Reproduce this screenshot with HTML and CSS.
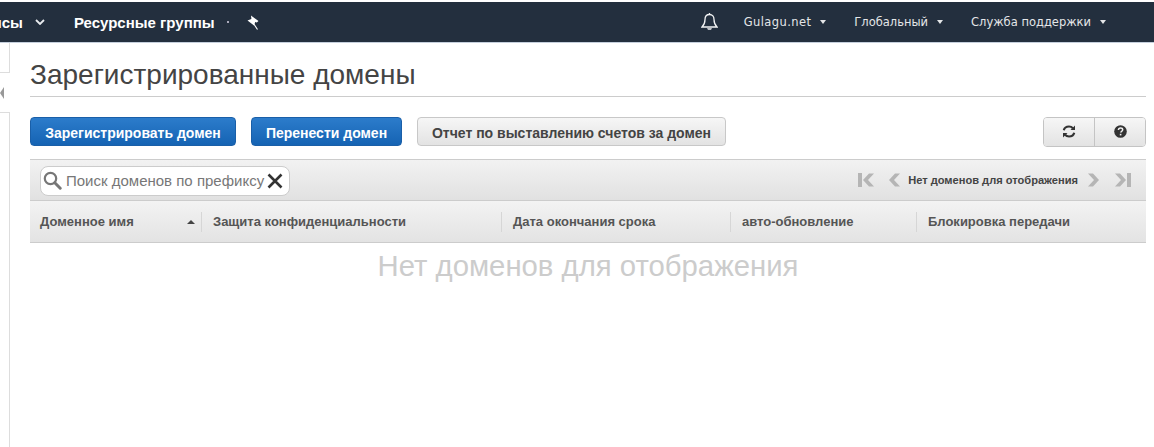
FILE: index.html
```html
<!DOCTYPE html>
<html lang="ru">
<head>
<meta charset="utf-8">
<title>Зарегистрированные домены</title>
<link rel="stylesheet" href="styles.css">
</head>
<body>
<header class="nav">
  <div class="nav-left">
    <span class="nav-item services">Сервисы</span>
    <svg class="chev" width="10" height="6" viewBox="0 0 10 6"><path d="M1 1l4 4 4-4" fill="none" stroke="#e8ebee" stroke-width="1.8"/></svg>
    <span class="nav-item groups">Ресурсные группы</span>
    <span class="dot"></span>
    <svg class="pin" width="14" height="15" viewBox="0 0 14 15"><path d="M5 0.500L12.500 6 10.800 7.600 9.200 7 8 10.500 1.500 5.500 5.400 4z" fill="#fff"/><path d="M7.500 8.500L11.500 14.500" stroke="#fff" stroke-width="1.200"/></svg>
  </div>
  <div class="nav-right">
    <svg class="bell" width="17" height="18" viewBox="0 0 17 18"><path d="M8.500 1.500c-3 0-4.500 2.200-4.500 5 0 3.500-1 5.500-3 7.500h15c-2-2-3-4-3-7.500 0-2.800-1.500-5-4.500-5z" fill="none" stroke="#f2f3f4" stroke-width="1.300"/><path d="M6 15.200h5l-1 1.600H7z" fill="#f2f3f4"/><path d="M8.500 0v2" stroke="#f2f3f4" stroke-width="1.300"/></svg>
    <span class="menu m1">Gulagu.net<i class="caret"></i></span>
    <span class="menu m2">Глобальный<i class="caret"></i></span>
    <span class="menu m3">Служба поддержки<i class="caret"></i></span>
  </div>
</header>
<div class="page">
  <aside class="rail">
    <div class="rail-top"></div>
    <div class="rail-gap"><i class="rail-arrow"></i></div>
    <div class="rail-bottom"></div>
  </aside>
  <main class="content">
    <h1 class="title">Зарегистрированные домены</h1>
    <div class="actions">
      <button class="btn primary b1">Зарегистрировать домен</button>
      <button class="btn primary b2">Перенести домен</button>
      <button class="btn plain b3">Отчет по выставлению счетов за домен</button>
      <div class="icon-group">
        <button class="icon-btn">
          <svg width="14" height="13" viewBox="0 0 14 13"><path d="M1.800 5.200C2.400 2.800 4.400 1.500 7 1.500c1.700 0 3 .7 3.900 1.700" fill="none" stroke="#333" stroke-width="2.200"/><path d="M13 .6v4.500H8.500z" fill="#333"/><path d="M12.200 7.800c-.6 2.400-2.600 3.700-5.200 3.700-1.700 0-3-.7-3.900-1.700" fill="none" stroke="#333" stroke-width="2.200"/><path d="M1 12.400V7.900h4.500z" fill="#333"/></svg>
        </button>
        <button class="icon-btn">
          <svg width="13" height="13" viewBox="0 0 13 13"><circle cx="6.500" cy="6.500" r="6.300" fill="#333"/><path d="M4.400 5c.1-1.200 1-1.900 2.200-1.900 1.200 0 2.100.7 2.100 1.700 0 1.500-2 1.500-2 2.800" fill="none" stroke="#f0f0f0" stroke-width="1.500"/><rect x="5.800" y="8.800" width="1.600" height="1.600" fill="#f0f0f0"/></svg>
        </button>
      </div>
    </div>
    <div class="toolbar">
      <div class="search">
        <svg class="mag" width="19" height="19" viewBox="0 0 19 19"><circle cx="7.500" cy="7.500" r="5.700" fill="none" stroke="#777" stroke-width="2.200"/><path d="M11.800 11.800l5.400 5.400" stroke="#777" stroke-width="3" stroke-linecap="round"/></svg>
        <span class="placeholder">Поиск доменов по префиксу</span>
        <svg class="clear" width="16" height="16" viewBox="0 0 16 16"><path d="M1.500 1.500l13 13M14.500 1.500l-13 13" stroke="#333" stroke-width="2.600"/></svg>
      </div>
      <div class="pager">
        <svg width="17" height="14" viewBox="0 0 17 14"><path d="M0 0h4v14H0zM11 0.500L5 7l6 6.500h5L10 7l6-6.500z" fill="#b5b5b5"/></svg>
        <svg class="p-prev" width="11" height="14" viewBox="0 0 11 14"><path d="M6 0.500L0 7l6 6.500h5L5 7l6-6.500z" fill="#b5b5b5"/></svg>
        <span class="pager-text">Нет доменов для отображения</span>
        <svg class="p-next" width="11" height="14" viewBox="0 0 11 14"><path d="M5 .5L11 7l-6 6.500H0L6 7 0 .5z" fill="#b5b5b5"/></svg>
        <svg class="p-last" width="17" height="14" viewBox="0 0 17 14"><path d="M17 0h-4v14h4zM6 .5L12 7l-6 6.500H1L7 7 1 .5z" fill="#b5b5b5"/></svg>
      </div>
    </div>
    <div class="thead">
      <div class="th c1">Доменное имя<i class="sort"></i></div>
      <div class="th c2">Защита конфиденциальности</div>
      <div class="th c3">Дата окончания срока</div>
      <div class="th c4">авто-обновление</div>
      <div class="th c5">Блокировка передачи</div>
    </div>
    <div class="empty">Нет доменов для отображения</div>
  </main>
</div>
</body>
</html>
```
FILE: styles.css
```css
* { box-sizing: border-box; }
html, body { margin: 0; padding: 0; height: 100%; }
body {
  background: #fff;
  font-family: "Liberation Sans", Arial, sans-serif;
  overflow: hidden;
  padding-top: 2px;
}
.nav {
  height: 41px;
  background: #232f3e;
  border-bottom: 1px solid #c5cfdc;
  display: flex;
  justify-content: space-between;
  align-items: center;
  overflow: hidden;
}
.nav-left, .nav-right { display: flex; align-items: center; }
.nav-item { color: #fff; font-weight: bold; font-size: 15px; white-space: nowrap; }
.services { margin-left: -45px; }
.chev { margin-left: 12px; }
.groups { margin-left: 29px; }
.dot { width: 2px; height: 2px; background: #aab; margin-left: 12px; }
.pin { margin-left: 17px; }
.nav-right { padding-right: 48px; }
.bell { margin-right: 26px; }
.menu {
  color: #e4e6e8;
  font-family: "DejaVu Sans", sans-serif;
  font-size: 11.500px;
  white-space: nowrap;
  display: flex;
  align-items: center;
}
.m1 { letter-spacing: .4px; }
.m2 { margin-left: 28px; }
.m3 { margin-left: 28px; }
.caret {
  width: 0; height: 0;
  border-left: 3.500px solid transparent;
  border-right: 3.500px solid transparent;
  border-top: 4px solid #e4e6e8;
  margin-left: 9px;
}
.page { display: flex; height: 404px; }
.rail { width: 10px; flex: none; display: flex; flex-direction: column; }
.rail-top { height: 30px; border-right: 1px solid #ddd; border-bottom: 1px solid #ddd; }
.rail-gap { height: 39px; display: flex; align-items: center; }
.rail-arrow {
  width: 0; height: 0;
  border-top: 6px solid transparent;
  border-bottom: 6px solid transparent;
  border-right: 4px solid #999;
}
.rail-bottom { flex: 1; border-right: 1px solid #ddd; border-top: 1px solid #ddd; }
.content { width: 1116px; margin-left: 20px; }
.title {
  margin: 0;
  height: 54px;
  padding-top: 15px;
  border-bottom: 1px solid #ccc;
  font-size: 28px;
  font-weight: normal;
  line-height: 34px;
  color: #444;
  white-space: nowrap;
}
.actions { display: flex; align-items: flex-start; margin-top: 20px; height: 42px; }
.btn {
  height: 29px;
  padding: 2px 0 0;
  border-radius: 4px;
  font-family: "Liberation Sans", Arial, sans-serif;
  font-size: 14px;
  font-weight: bold;
  white-space: nowrap;
}
.primary {
  color: #fff;
  border: 1px solid #1a5fa8;
  background: linear-gradient(#2c7ccb, #1563b3);
}
.plain {
  color: #444;
  border: 1px solid #c8c8c8;
  background: linear-gradient(#f6f6f6, #e3e3e3);
}
.b1 { width: 206px; }
.b2 { width: 151px; margin-left: 15px; }
.b3 { width: 309px; margin-left: 15px; }
.icon-group {
  display: flex;
  margin-left: auto;
  width: 103px;
  height: 30px;
  border: 1px solid #c4c4c4;
  border-radius: 4px;
  overflow: hidden;
}
.icon-btn {
  flex: 1;
  border: 0;
  padding: 0 0 2px;
  background: linear-gradient(#f6f6f6, #e3e3e3);
  display: flex;
  align-items: center;
  justify-content: center;
}
.icon-btn + .icon-btn { border-left: 1px solid #c4c4c4; }
.toolbar {
  height: 42px;
  border-top: 1px solid #ccc;
  border-bottom: 1px solid #ccc;
  background: linear-gradient(#f2f2f2, #e1e1e1);
  display: flex;
  align-items: center;
  justify-content: space-between;
  padding: 1px 15px 0 10px;
}
.search {
  width: 250px;
  height: 30px;
  background: #fff;
  border: 1px solid #ccc;
  border-radius: 8px;
  display: flex;
  align-items: center;
  padding-left: 2px;
}
.placeholder { font-size: 15px; color: #777; margin-left: 4px; white-space: nowrap; }
.clear { margin-left: 3px; flex: none; }
.pager { display: flex; align-items: center; margin-bottom: 2px; }
.p-prev { margin-left: 14px; }
.pager-text { font-size: 11.100px; font-weight: bold; color: #444; margin: 0 10px 0 8px; white-space: nowrap; }
.p-last { margin-left: 15px; }
.thead {
  height: 42px;
  border-bottom: 1px solid #ccc;
  background: linear-gradient(#f3f3f3, #e3e3e3);
  display: flex;
  align-items: center;
}
.th {
  font-size: 13px;
  font-weight: bold;
  color: #555;
  white-space: nowrap;
  height: 20px;
  line-height: 20px;
  padding-left: 11px;
  border-right: 1px solid #d6d6d6;
  position: relative;
}
.c1 { width: 172px; padding-left: 10px; }
.c2 { width: 300px; }
.c3 { width: 229px; }
.c4 { width: 186px; }
.c5 { border-right: 0; }
.sort {
  position: absolute;
  right: 6px;
  top: 8px;
  width: 0; height: 0;
  border-left: 4px solid transparent;
  border-right: 4px solid transparent;
  border-bottom: 4px solid #444;
}
.empty {
  text-align: center;
  font-size: 29.300px;
  color: #ccc;
  margin-top: 5px;
  line-height: 36px;
}
```
